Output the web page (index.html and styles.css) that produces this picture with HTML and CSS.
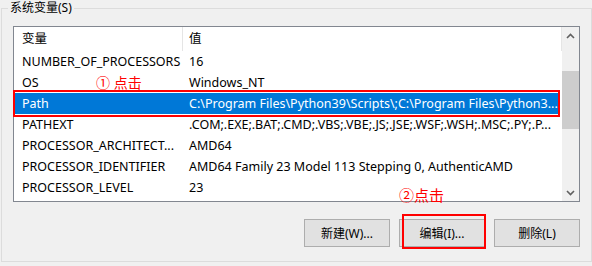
FILE: index.html
```html
<!DOCTYPE html>
<html lang="zh-CN">
<head>
  <meta charset="UTF-8">
  <title>系统变量</title>
  <link rel="stylesheet" href="styles.css">
</head>
<body>
  <div class="dialog">
    <fieldset class="group">
      <legend class="group-title">系统变量(S)</legend>

      <div class="listview">
        <div class="list-main">
          <div class="list-header">
            <div class="head-name">变量</div>
            <div class="head-value">值</div>
          </div>
          <div class="list-row">
            <span class="cell-name">NUMBER_OF_PROCESSORS</span>
            <span class="cell-value">16</span>
          </div>
          <div class="list-row">
            <span class="cell-name">OS</span>
            <span class="cell-value">Windows_NT</span>
          </div>
          <div class="list-row is-selected">
            <span class="cell-name">Path</span>
            <span class="cell-value">C:\Program Files\Python39\Scripts\;C:\Program Files\Python3...</span>
          </div>
          <div class="list-row">
            <span class="cell-name">PATHEXT</span>
            <span class="cell-value">.COM;.EXE;.BAT;.CMD;.VBS;.VBE;.JS;.JSE;.WSF;.WSH;.MSC;.PY;.P...</span>
          </div>
          <div class="list-row">
            <span class="cell-name">PROCESSOR_ARCHITECT...</span>
            <span class="cell-value">AMD64</span>
          </div>
          <div class="list-row">
            <span class="cell-name">PROCESSOR_IDENTIFIER</span>
            <span class="cell-value">AMD64 Family 23 Model 113 Stepping 0, AuthenticAMD</span>
          </div>
          <div class="list-row">
            <span class="cell-name">PROCESSOR_LEVEL</span>
            <span class="cell-value">23</span>
          </div>
        </div>

        <div class="scrollbar">
          <div class="scroll-btn">
            <svg width="9" height="6" viewBox="0 0 9 6"><path d="M1 5 L4.5 1.5 L8 5" fill="none" stroke="#606060" stroke-width="1.6"/></svg>
          </div>
          <div class="scroll-track">
            <div class="scroll-thumb"></div>
          </div>
          <div class="scroll-btn">
            <svg width="9" height="6" viewBox="0 0 9 6"><path d="M1 1 L4.5 4.5 L8 1" fill="none" stroke="#606060" stroke-width="1.6"/></svg>
          </div>
        </div>
      </div>

      <div class="buttons">
        <button class="btn">新建(W)...</button>
        <button class="btn">编辑(I)...</button>
        <button class="btn">删除(L)</button>
      </div>
    </fieldset>

    <!-- 标注 -->
    <span class="note note-row">① 点击</span>
    <span class="note note-btn">②点击</span>
    <div class="mark mark-row"></div>
    <div class="mark mark-btn"></div>
  </div>
</body>
</html>
```

FILE: styles.css
```css
:root {
  --bg: #f0f0f0;
  --group-border: #dcdcdc;
  --list-border: #828790;
  --select: #0078d7;
  --note: #ff0000;
}

* {
  margin: 0;
  padding: 0;
  box-sizing: border-box;
}

body {
  background: var(--bg);
  font-family: "Noto Sans", "Noto Sans CJK SC", sans-serif;
  font-size: 12px;
  color: #000;
  width: 592px;
  height: 266px;
  overflow: hidden;
}

.dialog {
  position: relative;
  width: 592px;
  height: 266px;
}

/* 分组框 */
.group {
  margin-left: 1px;
  width: 591px;
  border: 1px solid var(--group-border);
  padding: 10px 11px 14px 11px;
}

.group-title {
  margin-left: -5px;
  padding: 0 2px;
  line-height: 16px;
}

/* 列表 */
.listview {
  display: flex;
  height: 176px;
  border: 1px solid var(--list-border);
  background: #fff;
  font-size: 12.5px;
}

.list-main {
  width: 548px;
  overflow: hidden;
}

.list-header {
  display: flex;
  height: 24px;
  line-height: 24px;
}

.head-name,
.head-value {
  border-right: 1px solid #e5e5e5;
}

.head-name {
  width: 169px;
  padding-left: 8px;
}

.head-value {
  width: 379px;
  padding-left: 6px;
}

.list-row {
  display: flex;
  height: 21px;
  line-height: 21px;
  white-space: nowrap;
}

.list-row.is-selected {
  background: var(--select);
  color: #fff;
  margin-left: 1px;
  width: 545px;
}

.cell-name {
  width: 169px;
  padding-left: 8px;
  overflow: hidden;
}

.cell-value {
  flex: 1;
  padding-left: 6px;
  overflow: hidden;
}

.is-selected .cell-name {
  width: 168px;
  padding-left: 7px;
}

/* 滚动条 */
.scrollbar {
  width: 17px;
  display: flex;
  flex-direction: column;
  background: var(--bg);
}

.scroll-btn {
  height: 17px;
  display: flex;
  align-items: center;
  justify-content: center;
}

.scroll-track {
  flex: 1;
  padding-top: 27px;
}

.scroll-thumb {
  height: 58px;
  background: #cdcdcd;
}

/* 按钮 */
.buttons {
  display: flex;
  justify-content: flex-end;
  gap: 9px;
  margin-top: 17px;
}

.btn {
  width: 86px;
  height: 28px;
  background: #e1e1e1;
  border: 1px solid #adadad;
  font: inherit;
  color: #000;
}

/* 红色标注 */
.note {
  position: absolute;
  color: var(--note);
  line-height: 16px;
  white-space: nowrap;
}

.note-row {
  left: 96px;
  top: 75px;
  font-size: 14px;
}

.note-btn {
  left: 399px;
  top: 187px;
  font-size: 15px;
}

.mark {
  position: absolute;
  border: 2px solid var(--note);
}

.mark-row {
  left: 13px;
  top: 90px;
  width: 547px;
  height: 27px;
}

.mark-btn {
  left: 402px;
  top: 214px;
  width: 84px;
  height: 35px;
}
```
